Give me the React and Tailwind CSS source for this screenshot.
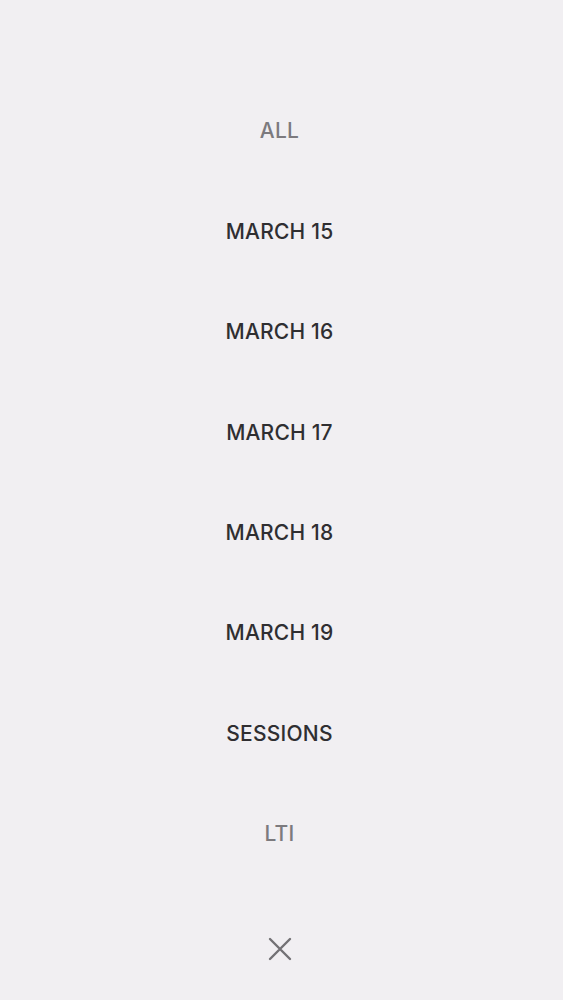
import React from 'react';

const items = [
  { label: 'ALL', muted: true },
  { label: 'MARCH 15' },
  { label: 'MARCH 16' },
  { label: 'MARCH 17' },
  { label: 'MARCH 18' },
  { label: 'MARCH 19' },
  { label: 'SESSIONS' },
  { label: 'LTI', muted: true },
];

export default function App() {
  return (
    <div
      className="w-[563px] h-[1000px] bg-[#f1eff2] flex flex-col items-center pt-[81px] pr-[4px]"
      style={{ fontFamily: 'Inter, "Noto Sans", sans-serif' }}
    >
      {items.map((it) => (
        <div key={it.label} className="h-[100.4px] flex items-center justify-center">
          <span
            className={
              'text-[21px] font-medium tracking-[0.01em] ' +
              (it.muted ? 'text-[#7c7a7e]' : 'text-[#2f2e31]')
            }
          >
            {it.label}
          </span>
        </div>
      ))}
      <button className="mt-[45px] w-[40px] h-[40px] flex items-center justify-center text-[#737175]">
        <svg width="24" height="24" viewBox="0 0 24 24" fill="none" stroke="currentColor" strokeWidth="2.4" strokeLinecap="round">
          <path d="M2 2 L22 22 M22 2 L2 22" />
        </svg>
      </button>
    </div>
  );
}
